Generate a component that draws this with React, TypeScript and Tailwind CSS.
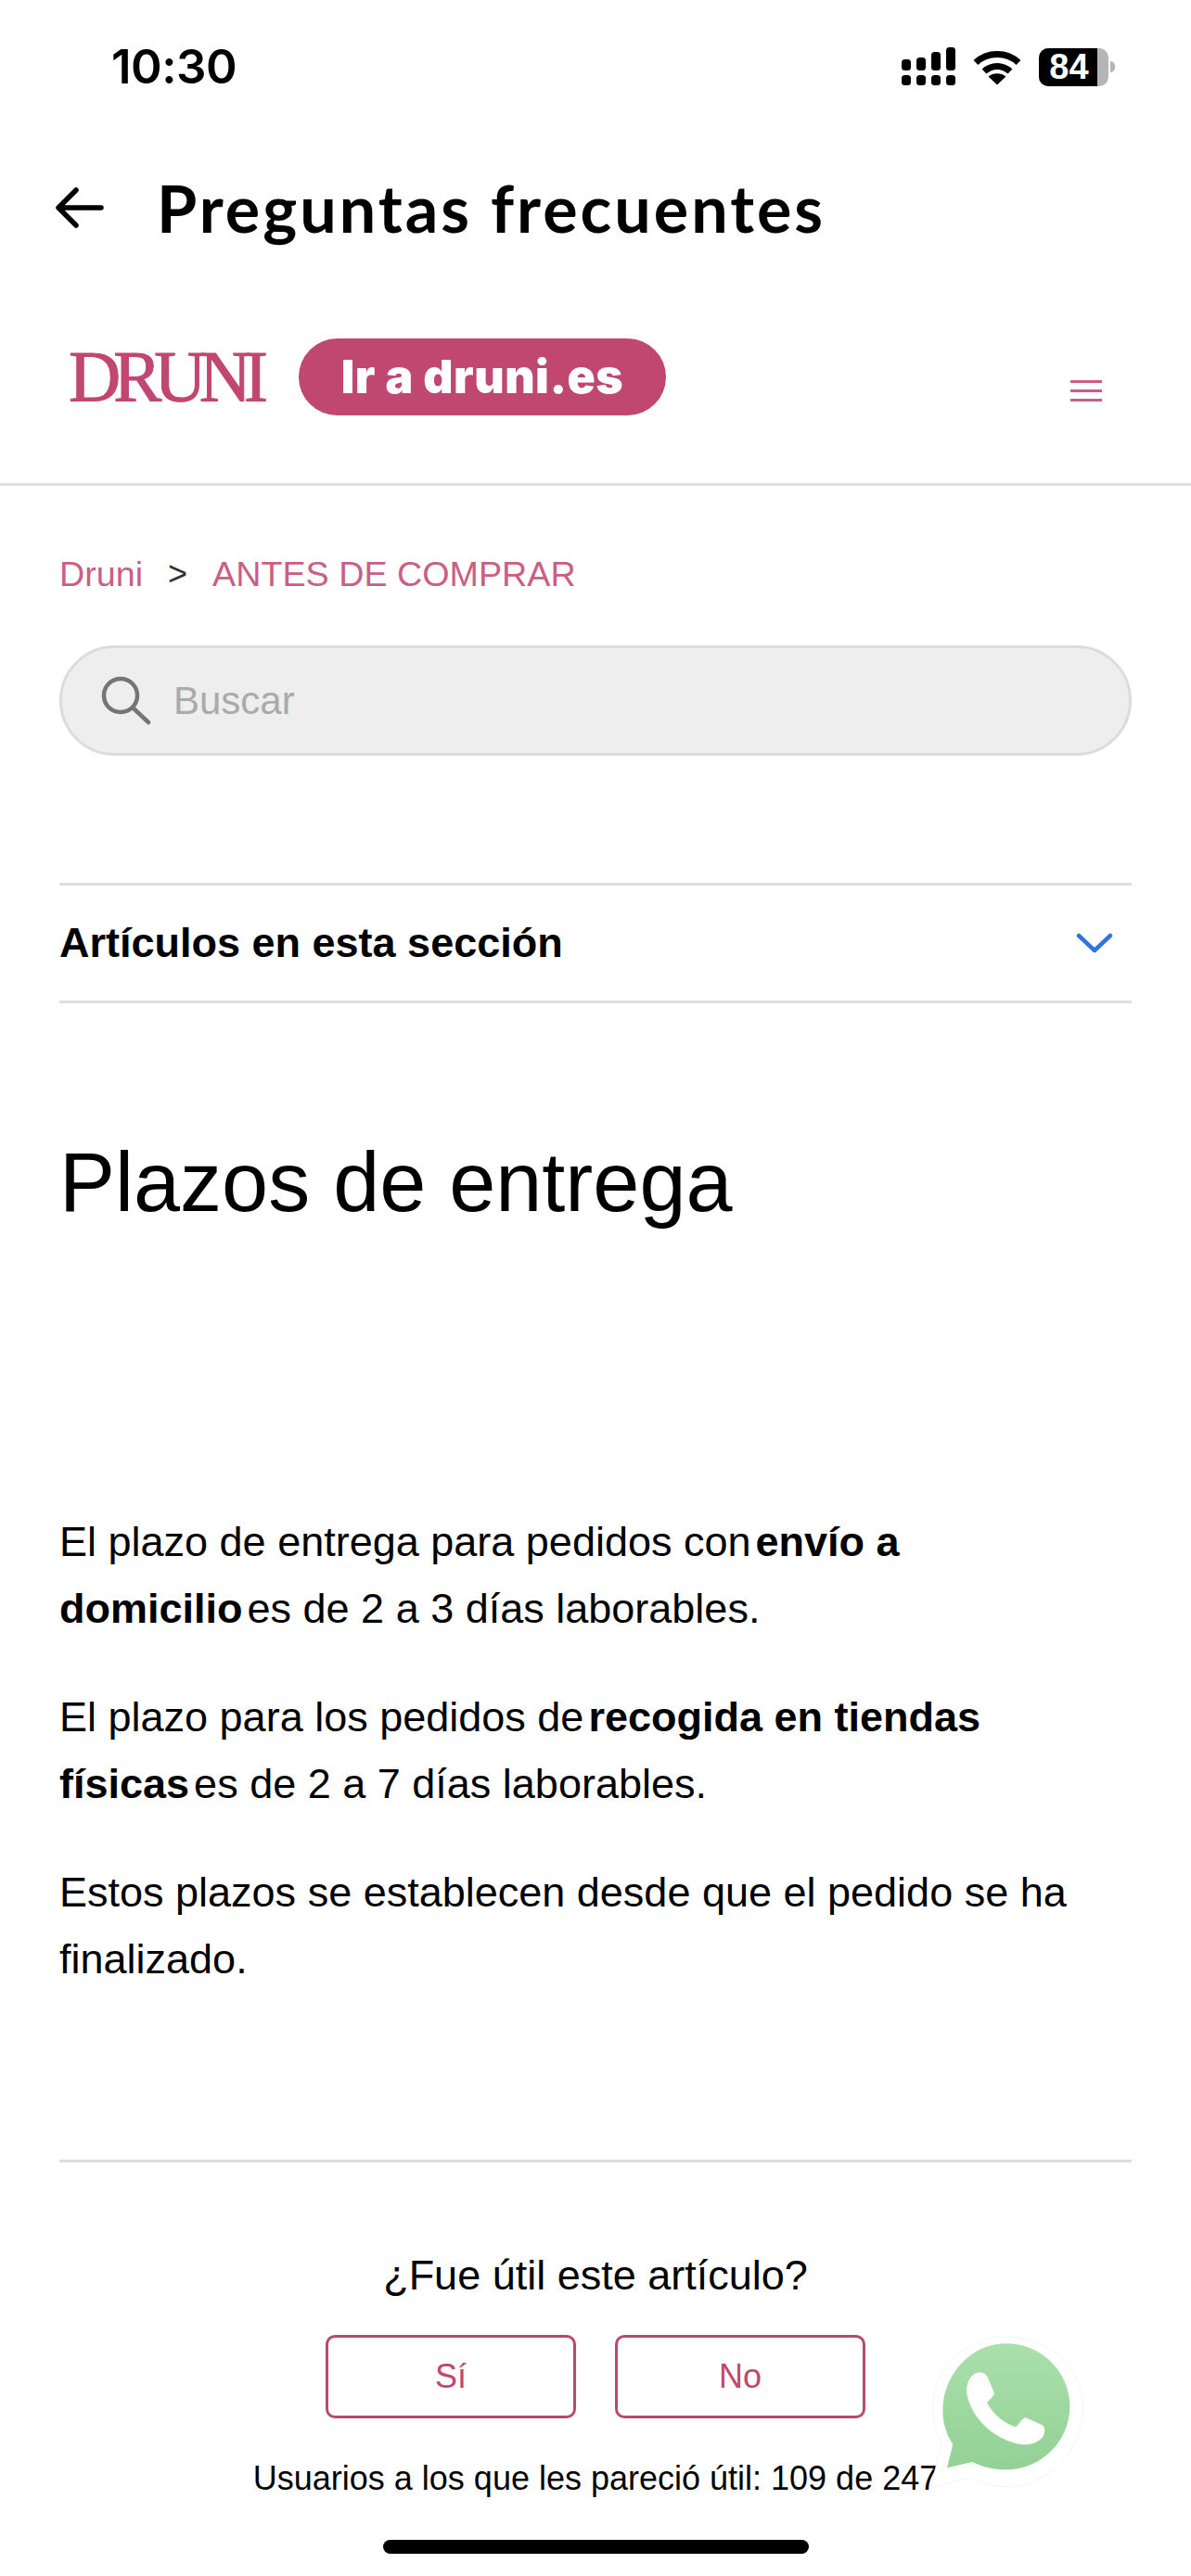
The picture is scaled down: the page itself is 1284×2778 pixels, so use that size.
import {useState} from "react";

const SANS = "font-['Liberation_Sans',Arial,sans-serif]";

const SignalIcon = () => (
  <svg width="58" height="42" viewBox="0 0 58 42" className="fill-black">
    <rect x="0" y="13" width="10" height="12" rx="3.5"/>
    <rect x="16" y="11" width="10" height="14" rx="3.5"/>
    <rect x="32" y="5" width="10" height="20" rx="3.5"/>
    <rect x="48" y="0" width="10" height="25" rx="3.5"/>
    <rect x="0" y="30" width="10" height="11" rx="3.5"/>
    <rect x="16" y="30" width="10" height="11" rx="3.5"/>
    <rect x="32" y="30" width="10" height="11" rx="3.5"/>
    <rect x="48" y="30" width="10" height="11" rx="3.5"/>
  </svg>
);

const WifiIcon = () => (
  <svg width="52" height="39" viewBox="0 0 52 39" fill="none" className="stroke-black">
    <path d="M3 14.5C15.5 2.5 36.5 2.5 49 14.5" strokeWidth="7"/>
    <path d="M12 24C20 16.5 32 16.5 40 24" strokeWidth="7"/>
    <path d="M26 38.500L16.500 29.500C21.500 25 30.500 25 35.500 29.500Z" className="fill-black" strokeWidth="0"/>
  </svg>
);

const Battery = () => (
  <div className="flex items-center">
    <div className="flex h-[41px] w-[75px] overflow-hidden rounded-[10px] bg-[#b5b5b5]">
      <div className={`flex w-[63px] items-center justify-center bg-black pl-[2px] text-[38px] font-bold text-white ${SANS}`}>84</div>
    </div>
    <div className="ml-[2px] h-[12px] w-[5px] rounded-r-full bg-[#b5b5b5]"/>
  </div>
);

const WhatsappButton = () => (
  <svg viewBox="0 0 600 600" className="absolute left-[980px] top-[2500px] h-[200px] w-[200px]">
    <defs>
      <linearGradient id="wa-green" x1="0" y1="0" x2="0" y2="1">
        <stop offset="0" stopColor="#aae0ab"/>
        <stop offset="1" stopColor="#92d195"/>
      </linearGradient>
    </defs>
    {/* white halo round the bubble */}
    <path d="M70 548L105 405C25 250 125 60 315 60C465 60 562 170 562 290C562 440 440 545 315 545C270 545 230 532 195 516Z" fill="#fff" stroke="#eeeeee" strokeWidth="2"/>
    <path d="M123 484L142 408C55 280 150 82 315 82C430 82 520 175 520 285C520 400 425 490 315 490C275 490 240 482 205 465Z" fill="url(#wa-green)"/>
    <path d="M215 178C235 172 250 178 256 195L275 240C278 250 262 262 252 272C268 305 305 340 345 352C355 345 365 322 378 322L430 345C442 352 440 370 432 385C415 405 385 415 345 405C270 385 205 325 188 250C182 215 195 190 215 178Z" fill="#fff"/>
  </svg>
);

export default function App() {
  const [vote, setVote] = useState<string | null>(null);

  return (
    <div className={`relative h-[2778px] w-full overflow-hidden bg-white text-black ${SANS}`}>
      <div className="flex h-[144px] items-center justify-between pl-[120px] pr-[82px]">
        <span className="font-['Inter',sans-serif] text-[51px] font-semibold tracking-[-0.5px]">10:30</span>
        <div className="flex items-center gap-[19px]">
          <SignalIcon/>
          <WifiIcon/>
          <Battery/>
        </div>
      </div>

      <div className="flex h-[160px] items-center pl-[60px]">
        <svg width="52" height="44" viewBox="0 0 52 44" fill="none" stroke="black" strokeWidth="5.500" strokeLinecap="round" strokeLinejoin="round">
          <path d="M49 22H4M22 3L3 22L22 41"/>
        </svg>
        <h2 className="ml-[57px] font-['Lato',sans-serif] text-[70px] font-bold tracking-[3px]">Preguntas frecuentes</h2>
      </div>

      <header className="flex h-[220px] items-start border-b-[3px] border-[#e0e0e0] pl-[74px] pr-[96px] pt-[61px]">
        <span className="mt-[9px] w-[248px] font-['Liberation_Serif',serif] text-[78px] leading-[64px] tracking-[-8px] text-[#c04770] [-webkit-text-stroke:1px_#c04770]">DRUNI</span>
        <a className="flex h-[83px] w-[396px] items-center justify-center rounded-full bg-[#c04770] font-['Inter',sans-serif] text-[50px] font-black tracking-[0.5px] text-white">Ir a druni.es</a>
        <div className="ml-auto mt-[45px] flex w-[34px] flex-col gap-[7px]">
          <span className="h-[3px] bg-[#c95f85]"/>
          <span className="h-[3px] bg-[#c95f85]"/>
          <span className="h-[3px] bg-[#c95f85]"/>
        </div>
      </header>

      <main className="px-[64px]">
        <nav className="flex h-[172px] items-center pt-[18px] text-[37.700px] text-[#c95f85]">
          <span>Druni</span>
          <span className="mx-[27px] text-[36px] text-[#333]">&gt;</span>
          <span>ANTES DE COMPRAR</span>
        </nav>

        <label className="flex h-[119px] items-center rounded-full border-[3px] border-[#dcdcdc] bg-[#eeeeee] pl-[40px]">
          <svg width="56" height="56" viewBox="0 0 56 56" fill="none" stroke="#757575" strokeWidth="4.500" strokeLinecap="round">
            <circle cx="23" cy="22" r="18"/>
            <path d="M36 35L53 51"/>
          </svg>
          <input placeholder="Buscar" className="ml-[24px] min-w-0 flex-1 bg-transparent text-[42px] outline-none placeholder:text-[#aaaaaa]"/>
        </label>

        <div className="mt-[137px] flex h-[130px] items-center justify-between border-y-[3px] border-[#dedede] pr-[20px]">
          <h3 className="text-[45px] font-bold">Artículos en esta sección</h3>
          <svg width="40" height="22" viewBox="0 0 40 22" fill="none" stroke="#2f74e0" strokeWidth="4.500" strokeLinecap="round" strokeLinejoin="round">
            <path d="M3 3L20 19L37 3"/>
          </svg>
        </div>

        <h1 className="mt-[143px] text-[90px] leading-[100px]">Plazos de entrega</h1>

        <article className="mt-[302px] flex flex-col gap-[45px] text-[45px] leading-[72px]">
          <p>El plazo de entrega para pedidos con<strong className="ml-[5px]">envío a domicilio</strong><span className="ml-[5px]">es de 2 a 3 días laborables.</span></p>
          <p>El plazo para los pedidos de<strong className="ml-[5px]">recogida en tiendas físicas</strong><span className="ml-[5px]">es de 2 a 7 días laborables.</span></p>
          <p>Estos plazos se establecen desde que el pedido se ha finalizado.</p>
        </article>

        <section className="mt-[180px] flex flex-col items-center border-t-[3px] border-[#dedede]">
          <p className="mt-[94px] text-[45px] leading-[56px]">¿Fue útil este artículo?</p>
          <div className="mt-[36px] flex gap-[42px]">
            {["Sí", "No"].map((label) => (
              <button
                key={label}
                onClick={() => setVote(label)}
                className={`h-[90px] w-[270px] rounded-[10px] border-[3px] border-[#b84a6e] text-[36px] text-[#c04770] ${vote === label ? "bg-[#fdf2f6]" : ""}`}
              >
                {label}
              </button>
            ))}
          </div>
          <p className="mt-[45px] text-[36px] leading-[40px]">Usuarios a los que les pareció útil: 109 de 247</p>
        </section>
      </main>

      <WhatsappButton/>
      <div className="absolute bottom-[24px] left-[413px] h-[15px] w-[459px] rounded-full bg-black"/>
    </div>
  );
}
